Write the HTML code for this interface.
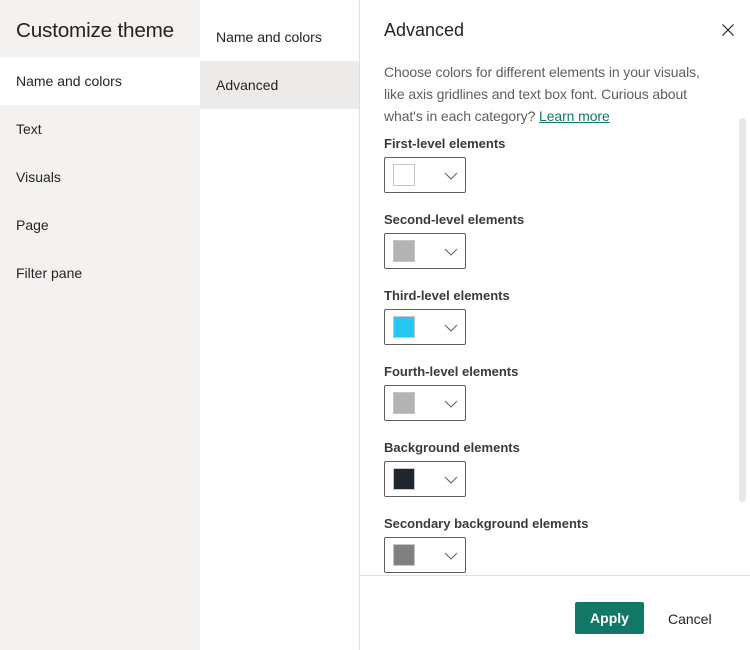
<!DOCTYPE html><html><head><style>
body{margin:0;width:750px;height:650px;overflow:hidden;font-family:"Liberation Sans",sans-serif;background:#fff;position:relative}
.l{position:absolute;left:0;top:0;width:200px;height:650px;background:#f3f2f1}
.l h1{position:absolute;left:16px;top:19px;margin:0;font-size:20.7px;font-weight:normal;color:#252423;letter-spacing:-0.2px}
.li{position:absolute;left:0;width:200px;height:48px;line-height:48px;padding-left:16px;box-sizing:border-box;font-size:14px;color:#252423}
.m{position:absolute;left:200px;top:0;width:159px;height:650px;background:#fff;border-right:1px solid #e1dfdd}
.mi{position:absolute;left:0;width:159px;height:48px;line-height:48px;padding-left:16px;box-sizing:border-box;font-size:14px;color:#252423}
.r h2{position:absolute;left:384px;top:20px;margin:0;font-size:18px;font-weight:normal;color:#252423}
.d{position:absolute;left:384px;top:61px;width:340px;font-size:14px;line-height:22px;color:#605e5c;letter-spacing:-0.1px}
.d a{color:#117865;text-decoration:underline}
.lab{position:absolute;left:384px;font-size:13px;font-weight:bold;color:#3b3a39}
.box{position:absolute;left:384px;width:80px;height:34px;border:1px solid #605e5c;border-radius:2px;background:#fff}
.sw{position:absolute;left:8px;top:6px;width:20px;height:20px;border:1px solid #c8c6c4}
.box svg{position:absolute;left:59px;top:14px}
.sb{position:absolute;left:739px;top:118px;width:7px;height:384px;background:#e8e8e8;border-radius:4px}
.ft{position:absolute;left:360px;top:575px;width:390px;border-top:1px solid #e1dfdd}
.ap{position:absolute;left:575px;top:602px;width:69px;height:32px;background:#117865;border-radius:2px;color:#fff;font-weight:bold;font-size:14px;text-align:center;line-height:33px}
.cn{position:absolute;left:668px;top:603px;line-height:32px;font-size:14px;color:#252423}
</style></head><body>
<div class="l"><h1>Customize theme</h1>
<div class="li" style="top:57px;background:#fff">Name and colors</div>
<div class="li" style="top:105px">Text</div>
<div class="li" style="top:153px">Visuals</div>
<div class="li" style="top:201px">Page</div>
<div class="li" style="top:249px">Filter pane</div></div>
<div class="m"><div class="mi" style="top:13px">Name and colors</div><div class="mi" style="top:61px;background:#edebe9">Advanced</div></div>
<div class="r"><h2>Advanced</h2>
<svg style="position:absolute;left:722px;top:24px" width="12" height="12"><path d="M0.5 0.5L11.5 11.5M11.5 0.5L0.5 11.5" stroke="#252423" stroke-width="1.2"/></svg>
<div class="d">Choose colors for different elements in your visuals, like axis gridlines and text box font. Curious about what's in each category? <a>Learn more</a></div>
<div class="lab" style="top:136px">First-level elements</div>
<div class="box" style="top:157px"><div class="sw" style="background:#fff"></div><svg width="14" height="8"><path d="M1 1L7 7L13 1" fill="none" stroke="#605e5c"/></svg></div>
<div class="lab" style="top:212px">Second-level elements</div>
<div class="box" style="top:233px"><div class="sw" style="background:#b3b3b3"></div><svg width="14" height="8"><path d="M1 1L7 7L13 1" fill="none" stroke="#605e5c"/></svg></div>
<div class="lab" style="top:288px">Third-level elements</div>
<div class="box" style="top:309px"><div class="sw" style="background:#25c8f5"></div><svg width="14" height="8"><path d="M1 1L7 7L13 1" fill="none" stroke="#605e5c"/></svg></div>
<div class="lab" style="top:364px">Fourth-level elements</div>
<div class="box" style="top:385px"><div class="sw" style="background:#b3b3b3"></div><svg width="14" height="8"><path d="M1 1L7 7L13 1" fill="none" stroke="#605e5c"/></svg></div>
<div class="lab" style="top:440px">Background elements</div>
<div class="box" style="top:461px"><div class="sw" style="background:#1f2630"></div><svg width="14" height="8"><path d="M1 1L7 7L13 1" fill="none" stroke="#605e5c"/></svg></div>
<div class="lab" style="top:516px">Secondary background elements</div>
<div class="box" style="top:537px"><div class="sw" style="background:#808080"></div><svg width="14" height="8"><path d="M1 1L7 7L13 1" fill="none" stroke="#605e5c"/></svg></div>
<div class="sb"></div>
<div style="position:absolute;left:360px;top:576px;width:390px;height:74px;background:#fff"></div>
<div class="ft"></div>
<div class="ap">Apply</div><div class="cn">Cancel</div>
</div></body></html>
